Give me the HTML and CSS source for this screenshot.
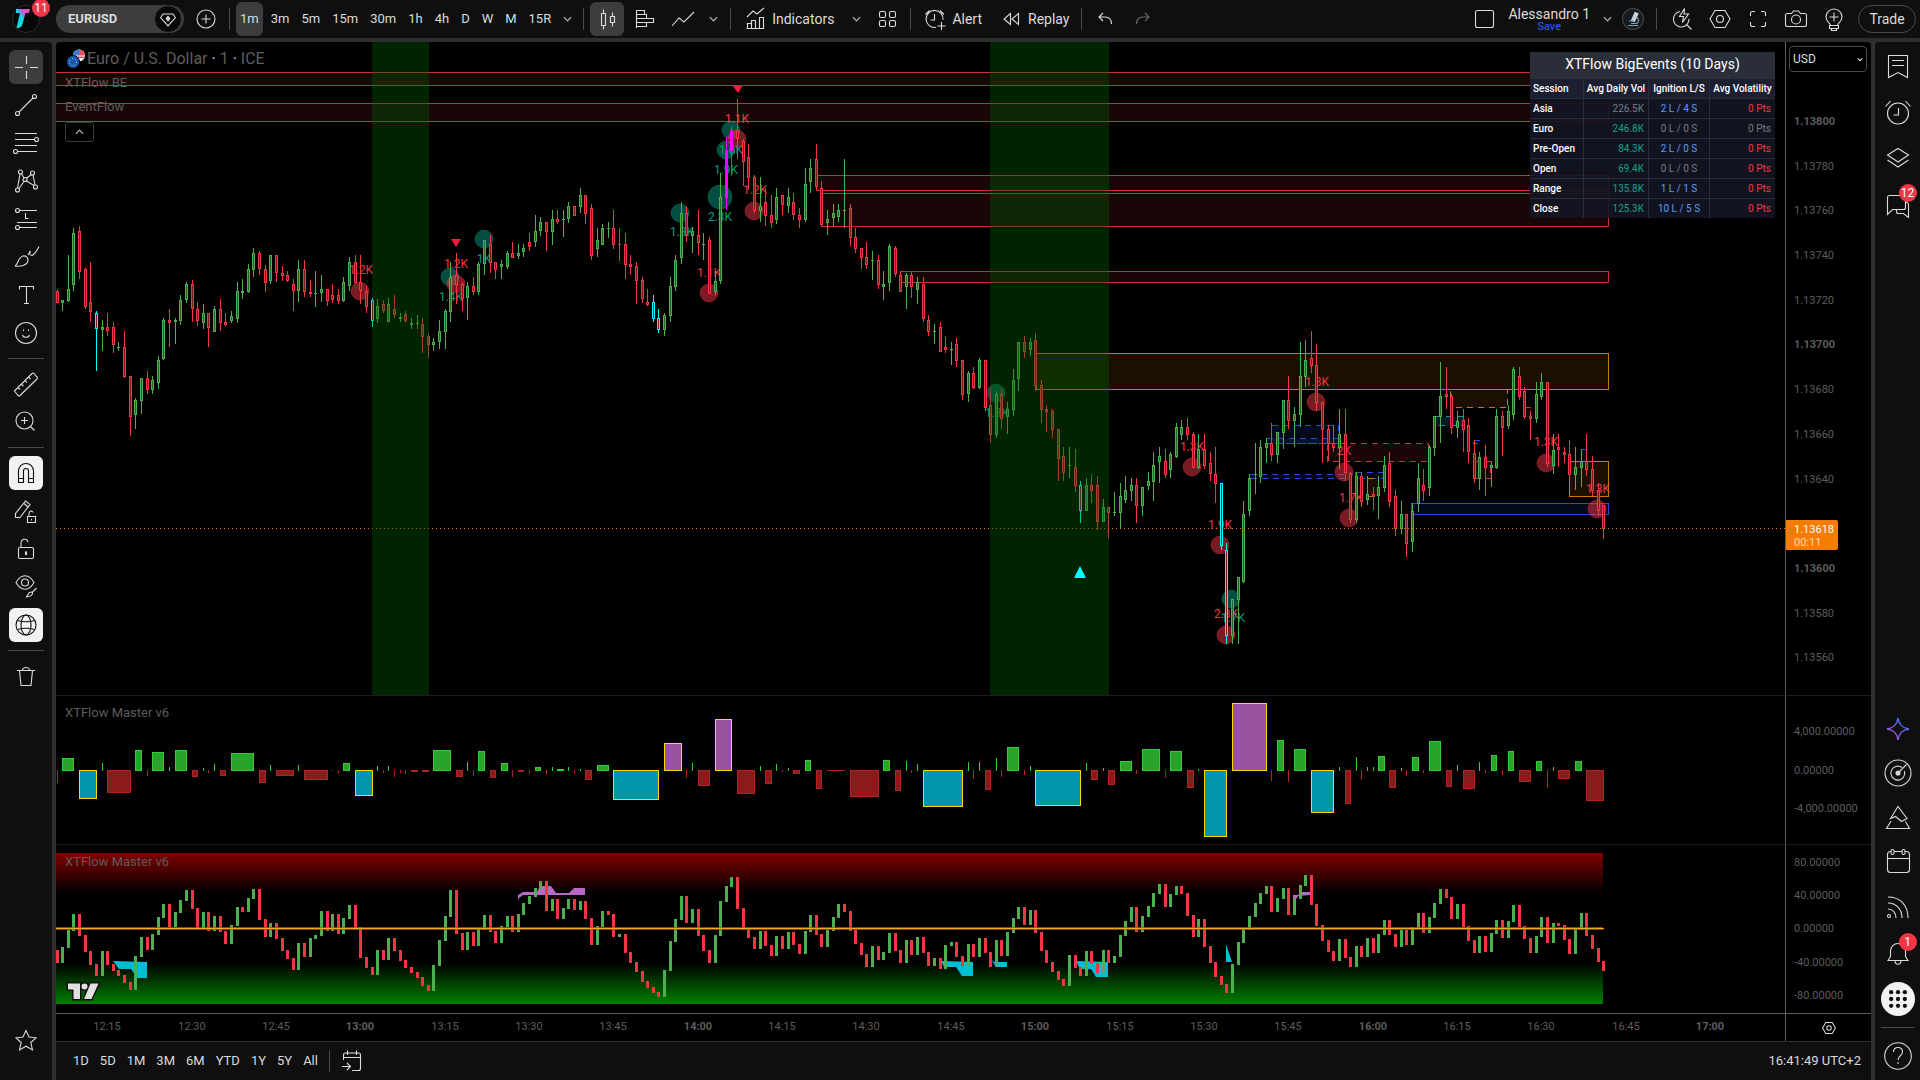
FILE: index.html
```html
<!DOCTYPE html>
<html lang="en">
<head>
<meta charset="utf-8">
<meta name="viewport" content="width=device-width, initial-scale=1">
<title>EURUSD 1.13618 Alessandro 1</title>
<link rel="stylesheet" href="styles.css">
</head>
<body>
<div class="app">
  <header class="topbar">
    <button class="logo" aria-label="Main menu">
      <svg width="30" height="30" viewBox="0 0 30 30"><defs><linearGradient id="lg" x1="1" y1="0" x2="0" y2="1"><stop offset="0" stop-color="#ff3fa4"/><stop offset=".35" stop-color="#c45be0"/><stop offset=".5" stop-color="#12d3ee"/><stop offset="1" stop-color="#10e0c8"/></linearGradient></defs><circle cx="15" cy="15" r="13.5" fill="#070707" stroke="#2b2b2b"/><path d="M5 5h14l-1 4h-3.500l-3 11c-1 3-2.500 4.500-6 4l3.500-15H5z" fill="url(#lg)"/></svg>
      <span class="badge">11</span>
    </button>
    <button class="symbol"><b>EURUSD</b><span class="gem"><svg class="icon" viewBox="0 0 28 28"><path d="M8.500 8.500h11l2.500 4-8 9-8-9z"/><path class="solid" d="M14 11l2 2.500-2 2.500-2-2.500z"/></svg></span></button>
    <button class="tool plus" aria-label="Compare"><svg class="icon" viewBox="0 0 28 28"><circle cx="14" cy="14" r="9"/><path d="M14 9.500v9M9.500 14h9"/></svg></button>
    <i class="sep"></i>
    <nav class="intervals">
      <button class="on">1m</button><button>3m</button><button>5m</button><button>15m</button><button>30m</button><button>1h</button><button>4h</button><button>D</button><button>W</button><button>M</button><button>15R</button>
      <button class="chev" aria-label="More intervals"><svg viewBox="0 0 10 6"><path d="M1 1l4 4 4-4"/></svg></button>
    </nav>
    <i class="sep"></i>
    <button class="tool wide on" aria-label="Candles"><svg class="icon" viewBox="0 0 28 28"><path d="M8.500 8.500h4v12h-4zM10.500 4.500v4M10.500 20.500v4M17.500 11.500h4v6h-4zM19.500 7.500v4M19.500 17.500v4"/></svg></button>
    <button class="tool wide" aria-label="Volume profile"><svg class="icon" viewBox="0 0 28 28"><path d="M5.500 5v18M5.500 5.500h8v4h-8M5.500 9.500h10v4h-10M5.500 13.500h17v4h-17M5.500 17.500h10v4h-10"/></svg></button>
    <button class="tool wide" aria-label="Line"><svg class="icon" viewBox="0 0 28 28"><path d="M3 21l7-8 5 4L25 7"/></svg></button>
    <button class="chev types" aria-label="Chart types"><svg viewBox="0 0 10 6"><path d="M1 1l4 4 4-4"/></svg></button>
    <i class="sep"></i>
    <button class="tool text"><svg class="icon" viewBox="0 0 28 28"><path d="M6 12l6-6 4 3 7-6M6.500 23.500v-5h4v5M10.500 23.500v-8h4v8M18.500 23.500v-11h4v11zM5.500 23.500h17"/></svg>Indicators</button>
    <button class="chev" aria-label="Favorite indicators"><svg viewBox="0 0 10 6"><path d="M1 1l4 4 4-4"/></svg></button>
    <button class="tool wide" aria-label="Templates"><svg class="icon" viewBox="0 0 28 28"><rect x="6.500" y="6.500" width="6" height="6" rx="1.500"/><rect x="16.500" y="6.500" width="6" height="6" rx="1.500"/><rect x="6.500" y="15.500" width="6" height="6" rx="1.500"/><rect x="16.500" y="15.500" width="6" height="6" rx="1.500"/></svg></button>
    <i class="sep"></i>
    <button class="tool text"><svg class="icon" viewBox="0 0 28 28"><path d="M15 22.300A8.500 8.500 0 1 1 22 15M13.500 9v6h-4M4.500 9.500l4-4M19 5.500l4 4M20.500 17v8M16.500 21h8"/></svg>Alert</button>
    <button class="tool text"><svg class="icon" viewBox="0 0 28 28"><path d="M13.500 8.500v11L7 14zM21.500 8.500v11L15 14z"/></svg>Replay</button>
    <i class="sep"></i>
    <button class="tool hist" aria-label="Undo"><svg class="icon" viewBox="0 0 28 28"><path d="M12 8l-4 4 4 4M8 12h6c4 0 6.500 2.500 6.500 7"/></svg></button>
    <button class="tool hist dim" aria-label="Redo"><svg class="icon" viewBox="0 0 28 28"><path d="M16 8l4 4-4 4M20 12h-6c-4 0-6.500 2.500-6.500 7"/></svg></button>
    <span class="grow"></span>
    <button class="tool wide setup" aria-label="Layout setup"><svg class="icon" viewBox="0 0 28 28"><rect x="4.500" y="5.500" width="18" height="17" rx="2"/></svg></button>
    <button class="layout">Alessandro 1<small>Save</small></button>
    <button class="chev" aria-label="Layouts"><svg viewBox="0 0 10 6"><path d="M1 1l4 4 4-4"/></svg></button>
    <button class="tool lab" aria-label="Lab"><svg class="icon" viewBox="0 0 28 28"><circle cx="14" cy="14" r="10.500" fill="#161b20" stroke="#444"/><path d="M16 7.500l3 1-3.500 8-3-1z" fill="#c6d2dc" stroke="#c6d2dc"/><path d="M9 20.500h10M12 18.500h6c2-2 2-4 0-6M10 16h5" stroke="#7fa0b8"/></svg></button>
    <i class="sep"></i>
    <button class="tool act" aria-label="Quick search"><svg class="icon" viewBox="0 0 28 28"><path d="M12 6.500a7.800 7.800 0 1 0 9 7.500M18.500 19.500l5 5M16.500 3.500l-5 8h4l-1 6 6-8.500h-4.500z"/></svg></button>
    <button class="tool act" aria-label="Settings"><svg class="icon" viewBox="0 0 28 28"><path d="M9 5.500h10l5 8.500-5 8.500H9L4 14z"/><circle cx="14" cy="14" r="3.500"/></svg></button>
    <button class="tool act" aria-label="Fullscreen"><svg class="icon" viewBox="0 0 28 28"><path d="M6.500 11V8.500a2 2 0 0 1 2-2H11M17 6.500h2.500a2 2 0 0 1 2 2V11M21.500 17v2.500a2 2 0 0 1-2 2H17M11 21.500H8.500a2 2 0 0 1-2-2V17"/></svg></button>
    <button class="tool act" aria-label="Snapshot"><svg class="icon" viewBox="0 0 28 28"><path d="M5.500 8.500h4l2-2.500h5l2 2.500h4a2 2 0 0 1 2 2v9a2 2 0 0 1-2 2h-17a2 2 0 0 1-2-2v-9a2 2 0 0 1 2-2z"/><circle cx="14" cy="14.500" r="4.500"/></svg></button>
    <button class="tool act" aria-label="Publish"><svg class="icon" viewBox="0 0 28 28"><path d="M10.500 20.500c0-2-4.500-4-4.500-8.500a8 8 0 0 1 16 0c0 4.500-4.500 6.500-4.500 8.500zM9.500 20.500h9v3h-9zM11.500 23.500v2h5v-2M14 7.500v9M9.500 12h9"/></svg></button>
    <button class="trade">Trade</button>
  </header>

  <div class="body">
    <aside class="left">
      <button class="dark" aria-label="Cross"><svg class="icon" viewBox="0 0 28 28"><path d="M14.500 3v8M14.500 18v8M3 14.500h8M18 14.500h8"/></svg></button>
      <button aria-label="Trend line"><svg class="icon" viewBox="0 0 28 28"><circle cx="5.500" cy="22.500" r="2"/><circle cx="22.500" cy="5.500" r="2"/><path d="M7 21L21 7"/></svg></button>
      <button aria-label="Fibonacci"><svg class="icon" viewBox="0 0 28 28"><path d="M3 4.500h22M3 10.500h20M3 16.500h22M5 22.500h20"/><circle cx="24.500" cy="10.500" r="2"/><circle cx="3.500" cy="22.500" r="2"/></svg></button>
      <button aria-label="Patterns"><svg class="icon" viewBox="0 0 28 28"><path d="M5.500 21.500L8 7M9.500 7l3 4.500M14.500 14l7.500 4.500M19.500 7.500L14 11.500M12 14.500L7 21.500M21 8l2 10"/><circle cx="8.500" cy="5" r="2"/><circle cx="20.500" cy="6" r="2"/><circle cx="5.500" cy="23" r="2"/><circle cx="23.500" cy="20" r="2"/><circle cx="13" cy="12.500" r="2"/></svg></button>
      <button aria-label="Forecasting"><svg class="icon" viewBox="0 0 28 28"><path d="M7 5.500h18M5 17.500h20M7 22.500h18M13.500 8v5.500h3"/><circle cx="5.500" cy="5.500" r="2"/><circle cx="5.500" cy="22.500" r="2"/></svg></button>
      <button aria-label="Brush"><svg class="icon" viewBox="0 0 28 28"><path d="M3 23c3-1 3-9 8-10 3-.5 5 1.500 5 4 0 5-7 7-13 6zM16 12l2.500-4M20 12.500c3-1.500 5-5 7-9"/><path d="M18 8c-1 3 0 4.500 2 4.500"/></svg></button>
      <button aria-label="Text"><svg class="icon" viewBox="0 0 28 28"><path d="M7.500 8.500v-3h14v3M14.500 5.500v17M12 22.500h5"/></svg></button>
      <button aria-label="Icons"><svg class="icon" viewBox="0 0 28 28"><circle cx="14" cy="14" r="10.500"/><path d="M10.500 16c1 3 6 3 7 0M11.500 10.500v1.500M16.500 10.500v1.500"/></svg></button>
      <i></i>
      <button aria-label="Measure"><svg class="icon" viewBox="0 0 28 28"><path d="M2.500 21L20 3.500a1.400 1.400 0 0 1 2 0L25 7a1.400 1.400 0 0 1 0 2L8 25.500a1.400 1.400 0 0 1-2 0zM6 17.500l2 2M9.500 14l2 2M13 10.500l2 2M16.500 7l2 2"/></svg></button>
      <button aria-label="Zoom in"><svg class="icon" viewBox="0 0 28 28"><circle cx="12.500" cy="12.500" r="8.500"/><path d="M12.500 9v7M9 12.500h7M18.500 18.500l4 4"/></svg></button>
      <i></i>
      <button class="light" aria-label="Magnet"><svg class="icon" viewBox="0 0 28 28"><path d="M6.500 23.500V12a7.500 7.500 0 0 1 15 0v11.500h-5V12a2.500 2.500 0 0 0-5 0v11.500zM6.500 19.500h5M16.500 19.500h5"/></svg></button>
      <button aria-label="Stay in drawing mode"><svg class="icon" viewBox="0 0 28 28"><path d="M3.500 20.500v-4L13.500 4l4.500 3.500-10 13zM12 6.500l4 3.500M15.500 19.500h8v6h-8zM17 19.500v-3c0-3 4-3 4-1M19.500 22v1.500"/></svg></button>
      <button aria-label="Lock all"><svg class="icon" viewBox="0 0 28 28"><rect x="6.500" y="12.500" width="15" height="11" rx="1.500"/><path d="M9 12.500V9c0-6 6-6 7-2"/><path class="solid" d="M13.500 17h1v2.500h-1z"/></svg></button>
      <button aria-label="Hide drawings"><svg class="icon" viewBox="0 0 28 28"><path d="M4 9.500c5-9 13-9 18 0-5 9-13 9-18 0z"/><circle cx="13" cy="9.500" r="3.500"/><path d="M14 24c2-.5 1.500-5 5-5 3 0 2 4.500-5 5zM20.500 19l4-4"/></svg></button>
      <button class="light" aria-label="Sync drawings"><svg class="icon" viewBox="0 0 28 28"><circle cx="14" cy="14" r="10"/><ellipse cx="14" cy="14" rx="5" ry="10"/><path d="M5.500 9.500c5 1.500 12 1.500 17 0M5.500 18.500c5-1.500 12-1.500 17 0"/></svg></button>
      <i></i>
      <button aria-label="Remove"><svg class="icon" viewBox="0 0 28 28"><path d="M5 8.500h18M7.500 8.500l1.500 15h10l1.500-15M10.500 8.500c0-4 7-4 7 0"/></svg></button>
      <span class="grow"></span>
      <button aria-label="Favorites"><svg class="icon" viewBox="0 0 28 28"><path d="M14 4.500l3 6.500 7 .8-5.200 4.700 1.700 7.500-6.500-3.800L7.500 24l1.700-7.500L4 11.800l7-.8z"/></svg></button>
    </aside>

    <main class="chart">
      <section class="pane">
        <svg class="plot" id="price"></svg>
        <div class="legend">
          <h1><svg width="22" height="22" viewBox="0 0 22 22"><circle cx="14" cy="7.500" r="6" fill="#f2f2f2"/><path d="M14 1.500a6 6 0 0 1 6 6h-6zM8.500 10h11v-1.500h-11z" fill="#e8505b"/><path d="M14 1.500a6 6 0 0 0-6 6h6z" fill="#3a7bd5"/><circle cx="8" cy="14" r="6.500" fill="#1659b7" stroke="#000"/><circle cx="8" cy="14" r="3.500" fill="none" stroke="#ffd54a" stroke-dasharray="1 2"/></svg>Euro / U.S. Dollar <em>·</em> 1 <em>·</em> ICE</h1>
          <p>XTFlow BE</p>
          <p>EventFlow</p>
          <button aria-label="Hide indicators legend"><svg viewBox="0 0 10 6"><path d="M1 5l4-4 4 4"/></svg></button>
        </div>
        <table class="events">
          <caption>XTFlow BigEvents (10 Days)</caption>
          <thead><tr><th>Session</th><th>Avg Daily Vol</th><th>Ignition L/S</th><th>Avg Volatility</th></tr></thead>
          <tbody>
            <tr><th>Asia</th><td>226.5K</td><td class="b">2 L / 4 S</td><td class="r">0 Pts</td></tr>
            <tr><th>Euro</th><td class="g">246.8K</td><td>0 L / 0 S</td><td>0 Pts</td></tr>
            <tr><th>Pre-Open</th><td class="g">84.3K</td><td class="b">2 L / 0 S</td><td class="r">0 Pts</td></tr>
            <tr><th>Open</th><td class="g">69.4K</td><td>0 L / 0 S</td><td class="r">0 Pts</td></tr>
            <tr><th>Range</th><td class="g">135.8K</td><td class="b">1 L / 1 S</td><td class="r">0 Pts</td></tr>
            <tr><th>Close</th><td class="g">125.3K</td><td class="b">10 L / 5 S</td><td class="r">0 Pts</td></tr>
          </tbody>
        </table>
      </section>
      <section class="scale">
        <svg class="plot" id="scale1"></svg>
        <label class="currency"><select aria-label="Currency"><option>USD</option></select><svg viewBox="0 0 10 6"><path d="M1 1l4 4 4-4"/></svg></label>
        <div class="last">1.13618<span>00:11</span></div>
      </section>
      <section class="pane"><svg class="plot" id="delta"></svg><div class="legend"><p>XTFlow Master v6</p></div></section>
      <section class="scale"><svg class="plot" id="scale2"></svg></section>
      <section class="pane last-pane"><svg class="plot" id="osc"></svg><div class="legend"><p>XTFlow Master v6</p></div>
        <svg class="brand" width="34" height="20" viewBox="0 0 34 20"><path d="M2 2.500h12V18H7.500V8.500H2zM15.500 5.500a3 3 0 1 0 6 0 3 3 0 0 0-6 0zM24.500 2.500h8L25.500 18h-7.500z" fill="#e0e0e0" stroke="#111" stroke-width="3" paint-order="stroke"/></svg></section>
      <section class="scale last-pane"><svg class="plot" id="scale3"></svg></section>
      <section class="times"><svg class="plot" id="times"></svg></section>
      <section class="corner"><button aria-label="Axis settings"><svg class="icon" width="20" height="20" viewBox="0 0 28 28"><path d="M9 5.500h10l5 8.500-5 8.500H9L4 14z"/><circle cx="14" cy="14" r="3.500"/></svg></button></section>
      <footer class="ranges">
        <button>1D</button><button>5D</button><button>1M</button><button>3M</button><button>6M</button><button>YTD</button><button>1Y</button><button>5Y</button><button>All</button>
        <i class="sep"></i>
        <button class="goto" aria-label="Go to date"><svg class="icon" viewBox="0 0 28 28"><path d="M5.500 13V8a2 2 0 0 1 2-2h13a2 2 0 0 1 2 2v13.500a2 2 0 0 1-2 2H14M5.500 10.500h17M9.500 3.500V8M18.500 3.500V8M4 19.500h8M9 16l3.500 3.500L9 23"/></svg></button>
        <span class="grow"></span>
        <button class="clock">16:41:49 UTC+2</button>
      </footer>
    </main>

    <aside class="right">
      <div class="grp">
        <button aria-label="Watchlist"><svg class="icon" viewBox="0 0 28 28"><path d="M4.500 3.500h19v22L14 20.500l-9.500 5zM8 8.500h12M8 13.500h12"/></svg></button>
        <button aria-label="Alerts"><svg class="icon" viewBox="0 0 28 28"><circle cx="14" cy="15.500" r="10.500"/><path d="M14.500 10v7h-5M1.500 8.500l5-5.500M26.500 8.500l-5-5.500"/></svg></button>
        <button aria-label="Object tree"><svg class="icon" viewBox="0 0 28 28"><path d="M14 4.500l10.500 6.500L14 18 3.500 11zM3.500 16L14 23l10.500-7"/></svg></button>
        <button aria-label="Chats"><svg class="icon" viewBox="0 0 28 28"><path d="M3.500 24.500v-17a2 2 0 0 1 2-2h14a2 2 0 0 1 2 2v10a2 2 0 0 1-2 2h-11zM21.500 12.500h1a2 2 0 0 1 2 2v13l-5-4h-5a2 2 0 0 1-2-2v-2"/></svg><span class="badge">12</span></button>
      </div>
      <span class="grow"></span>
      <div class="grp mid">
        <button aria-label="AI"><svg class="icon" viewBox="0 0 28 28"><defs><linearGradient id="ai" x1="1" y1="0" x2="0" y2="1"><stop offset="0" stop-color="#2b7bff"/><stop offset="1" stop-color="#c14be0"/></linearGradient></defs><path stroke="url(#ai)" stroke-width="1.500" d="M14 3c1 7 4 10 11 11-7 1-10 4-11 11-1-7-4-10-11-11 7-1 10-4 11-11z"/></svg></button>
        <button aria-label="Screeners"><svg class="icon" viewBox="0 0 28 28"><circle cx="14" cy="14" r="13"/><path d="M18 8.500A7 7 0 1 0 20.500 12M14 14l8.500-8.500"/><circle class="solid" cx="14" cy="14" r="2"/></svg></button>
        <button aria-label="Pine"><svg class="icon" viewBox="0 0 28 28"><path d="M14 3.500L6.500 15.500l5-2 6 5 5.500-3zM7 18L2.500 25.500h23L21.500 18.500"/></svg></button>
        <button aria-label="Calendar"><svg class="icon" viewBox="0 0 28 28"><rect x="3.500" y="4.500" width="22" height="21" rx="3"/><path d="M3.500 11.500h22"/><rect x="7" y="2.500" width="3" height="5" rx="1.500" fill="#0f0f0f"/><rect x="18" y="2.500" width="3" height="5" rx="1.500" fill="#0f0f0f"/></svg></button>
      </div>
      <div class="grp">
        <button aria-label="News"><svg class="icon" viewBox="0 0 28 28"><path d="M4 4c12 0 20 8 20 21M4 10c8 0 14 6 14 15M4 16c5 0 8 4 8 9"/><circle cx="5" cy="23" r="1.500"/></svg></button>
        <button aria-label="Notifications"><svg class="icon" viewBox="0 0 28 28"><path d="M4 21.500l2.500-4V12a7.500 7.500 0 0 1 15 0v5.500l2.500 4zM11 21.500c0 5 6 5 6 0"/></svg><span class="badge">1</span></button>
        <button aria-label="Apps"><span class="apps"><svg viewBox="0 0 28 28"><g fill="#0f0f0f"><circle cx="6" cy="6" r="2.500"/><circle cx="14" cy="6" r="2.500"/><circle cx="22" cy="6" r="2.500"/><circle cx="6" cy="14" r="2.500"/><circle cx="14" cy="14" r="2.500"/><circle cx="22" cy="14" r="2.500"/><circle cx="6" cy="22" r="2.500"/><circle cx="14" cy="22" r="2.500"/><circle cx="22" cy="22" r="2.500"/></g></svg></span></button>
      </div>
      <i></i>
      <button aria-label="Help"><svg class="icon" viewBox="0 0 28 28"><circle cx="14" cy="14" r="13.300"/><path d="M9.500 10c0-6 9-6 9 0 0 4-4.500 3.500-4.500 8M14 20v2"/></svg></button>
    </aside>
  </div>
</div>
<script src="chart.js"></script>
</body>
</html>
```
FILE: styles.css
```css
* { box-sizing: border-box; }
html, body { height: 100%; margin: 0; }
body { background: #2e2e2e; color: #dbdbdb; font: 14px/18px Roboto, "Liberation Sans", sans-serif; overflow: hidden; }
button { background: none; border: 0; margin: 0; padding: 0; color: inherit; font: inherit; cursor: pointer; }
.grow { flex: 1; }
.app { display: flex; flex-direction: column; gap: 4px; height: 100vh; min-height: 800px; }
.icon { width: 28px; height: 28px; fill: none; stroke: currentColor; stroke-width: 1.1; flex: none; }
.icon .solid { fill: currentColor; }
.badge { position: absolute; min-width: 18px; height: 18px; border-radius: 9px; background: #f23645; color: #fff; font-size: 12px; line-height: 18px; text-align: center; }

/* top toolbar */
.topbar { height: 38px; flex: none; display: flex; align-items: center; background: #0f0f0f; padding: 0 4px 0 11px; }
.logo { position: relative; width: 30px; height: 30px; }
.logo .badge { left: 21px; top: -5px; }
.symbol { display: flex; align-items: center; justify-content: space-between; width: 128px; height: 28px; margin-left: 15px; padding-left: 12px; border-radius: 14px; background: #3d3d3d; }
.symbol b { font-weight: 700; font-size: 13px; }
.gem { display: flex; width: 28px; height: 28px; margin-right: 2px; border-radius: 14px; background: #0a0a0a; border: 1px solid #3d3d3d; justify-content: center; align-items: center; }
.gem .icon { width: 26px; height: 26px; }
.sep { width: 1px; height: 22px; background: #4a4a4a; margin: 0 6px; flex: none; }
.tool { height: 34px; display: flex; align-items: center; justify-content: center; border-radius: 6px; }
.plus { width: 34px; margin-left: 5px; }
.wide, .hist { width: 34px; margin-right: 4px; }
.wide:has(+ .sep) { margin-right: 0; }
.on { background: #3d3d3d; }
.dim { color: #6a6a6a; }
.intervals { display: flex; align-items: center; height: 34px; font-size: 13px; }
.intervals button { height: 34px; padding: 0 6px; border-radius: 6px; }
.intervals .on { padding: 0 4px; margin-right: 2px; }
.chev { width: 22px; height: 34px; display: flex; align-items: center; justify-content: center; }
.chev svg, .legend button svg { width: 9px; height: 6px; fill: none; stroke: #b8b8b8; stroke-width: 1.3; }
.intervals .chev { padding: 0; width: 20px; }
.types { margin-left: -2px; }
.text { padding: 0 6px 0 4px; gap: 3px; }
.text + .text { margin-left: 5px; }
.text + .chev { margin: 0 3px 0 5px; }
.setup { margin-right: 0; }
.layout { height: 34px; line-height: 16px; text-align: center; margin: 0 6px; }
.layout small { display: block; font-size: 11px; line-height: 10px; color: #2962ff; }
.lab { width: 30px; margin-right: 2px; }
.act { width: 38px; }
.trade { width: 58px; height: 28px; border: 1px solid #4a4a4a; border-radius: 14px; margin-left: 5px; }

/* side toolbars */
.body { flex: 1; min-height: 0; display: flex; gap: 4px; }
.left { width: 52px; display: flex; flex-direction: column; align-items: center; gap: 4px; padding: 8px 0 23px; background: #0f0f0f; border-radius: 0 4px 0 0; }
.left button { width: 34px; height: 34px; flex: none; display: flex; align-items: center; justify-content: center; border-radius: 6px; }
.left .dark { background: #3d3d3d; }
.left .light { background: #f2f2f2; color: #0f0f0f; }
.left i { width: 36px; height: 1px; margin: 4px 0; background: #4a4a4a; flex: none; }
.right { width: 45px; display: flex; flex-direction: column; align-items: center; padding: 3px 0; background: #0f0f0f; border-radius: 4px 0 0 0; }
.right button { position: relative; width: 44px; height: 42px; display: flex; align-items: center; justify-content: center; }
.grp { display: flex; flex-direction: column; gap: 4px; }
.mid { margin-bottom: 5px; }
.mid button { height: 40px; }
.right .badge { right: 3px; top: 1px; }
.right > i { width: 33px; height: 1px; margin: 7px 0; background: #4a4a4a; }
.apps { width: 34px; height: 34px; border-radius: 17px; background: #f2f2f2; display: flex; align-items: center; justify-content: center; }
.apps svg { width: 24px; height: 24px; }

/* chart area */
.chart { flex: 1; min-width: 0; display: grid; grid-template-columns: minmax(0, 1fr) 86px; grid-template-rows: minmax(0, 1fr) 149px 168px 28px 39px; background: #000; border-radius: 4px 4px 0 0; overflow: hidden; }
.pane, .scale { position: relative; border-bottom: 1px solid #1c1c1c; overflow: hidden; }
.scale, .corner { border-left: 1px solid #5c5c5c; }
.last-pane { border-bottom: 0; }
.plot { position: absolute; inset: 0; width: 100%; height: 100%; font-size: 11px; fill: #5d5d5d; }
.plot .tag { font-size: 12px; text-anchor: middle; }
.plot .major { font-weight: 700; }
.legend { position: relative; padding: 8px 0 0 9px; color: #5d5d5d; font-size: 13px; }
.legend h1 { display: flex; align-items: center; margin: 0 0 6px; height: 18px; font-size: 16px; font-weight: 400; white-space: pre; }
.legend em { font-style: normal; color: #dbdbdb; }
.legend p { margin: 0 0 6px; line-height: 18px; }
.legend button { width: 29px; height: 20px; border: 1px solid #3d3d3d; border-radius: 3px; display: flex; align-items: center; justify-content: center; }
.brand { position: absolute; left: 10px; bottom: 12px; }

.events { position: absolute; top: 10px; right: 10px; width: 245px; border-collapse: separate; border-spacing: 0; table-layout: fixed; background: rgba(19, 22, 34, .9); font-size: 10px; line-height: 12px; }
.events caption { height: 27px; line-height: 25px; background: #2a2e39; color: #fff; font-size: 14px; }
.events th, .events td { height: 20px; padding: 0 3px; border-left: 1px solid #2a2e39; border-top: 1px solid #2a2e39; font-weight: 500; }
.events th:first-child { width: 53px; text-align: left; color: #fff; border-left: 0; }
.events thead th { height: 19px; background: #1c1f30; color: #fff; padding: 0; text-align: center; border-top: 0; }
.events thead th:first-child { padding: 0 3px; }
.events thead th:nth-child(2) { width: 65px; }
.events thead th:nth-child(3) { width: 61px; }
.events td { color: #787b86; font-weight: 400; text-align: right; padding-right: 4px; }
.events td:nth-child(3) { text-align: center; padding: 0; }
.events .g { color: #14a085; }
.events .b { color: #5b9cf6; }
.events .r { color: #f23645; }

.currency { position: absolute; left: 3px; right: 4px; top: 4px; display: block; }
.currency select { appearance: none; width: 100%; height: 26px; padding: 0 3px; border: 1px solid #4a4a4a; border-radius: 4px; background: #000; color: #dbdbdb; font: 12px/18px Roboto, sans-serif; }
.currency svg { position: absolute; right: 4px; top: 11px; width: 6px; height: 5px; fill: none; stroke: #dbdbdb; stroke-width: 1.8; }
.last { position: absolute; left: 0; top: 478px; width: 52px; height: 30px; padding: 3px 0 0 8px; border-radius: 0 2px 2px 0; background: #f57c00; color: #fff; font-size: 11px; line-height: 13px; }
.last span { display: block; color: #fbd9b5; }
.times { position: relative; border-top: 1px solid #5c5c5c; }
.corner { border-top: 1px solid #5c5c5c; display: flex; align-items: center; justify-content: center; }
.corner button { display: flex; }
.corner .icon { width: 18px; height: 18px; stroke-width: 1.6; }

/* date ranges */
.ranges { grid-column: 1 / -1; display: flex; align-items: center; padding: 0 5px 0 11px; background: #0f0f0f; border-top: 1px solid #2e2e2e; font-size: 13px; }
.ranges button { height: 30px; padding: 0 5px 0 6px; }
.ranges .goto { padding: 0 2px; display: flex; align-items: center; }
```
FILE: chart.js
```js
const NS = 'http://www.w3.org/2000/svg';
const GREEN = '#4caf50', RED = '#f23645', TEAL = '#089981';
const FIRST = -54;                       // first visible bar, counted from 13:00
const col = k => Math.round(304.3 + 5.624 * k);

function draw(root, tag, attrs, text) {
  const el = document.createElementNS(NS, tag);
  for (const name in attrs) el.setAttribute(name, attrs[name]);
  if (text !== undefined) el.textContent = text;
  root.appendChild(el);
  return el;
}
function rect(root, x, y, w, h, fill, more) {
  return draw(root, 'rect', Object.assign({ x, y, width: w, height: h, fill, 'shape-rendering': 'crispEdges' }, more));
}
const get = id => document.getElementById(id);

/* ---- price pane: colour, high, body top, body bottom, low (three units to a pixel) ---- */
const CANDLES = `r 868 873 908 910,g 900 900 908 932,g 765 868 902 905,g 684 699 854 872,r 678 693 815 838,r 805 808 920 926,r 786 905 935 965,c 933 938 988 1112,g 960 982 990 1052,r 938 982 994 1007,r 966 981 1035 1058,g 1025 1040 1043 1052,r 992 1042 1130 1133,r 1128 1129 1250 1308,g 1195 1201 1244 1287,g 1134 1135 1202 1242,r 1113 1135 1170 1182,g 1128 1141 1170 1182,g 1068 1080 1148 1167,g 955 960 1077 1080,r 926 960 968 1040,g 955 961 967 1032,g 884 899 962 975,g 846 853 900 908,r 840 853 928 965,r 905 928 964 977,g 911 940 968 987,r 938 940 983 1040,g 918 927 995 997,r 898 927 968 992,r 938 966 974 978,g 933 947 962 970,g 846 873 957 970,g 838 873 880 897,g 792 808 877 880,g 744 759 810 830,r 753 759 808 825,r 795 808 849 875,g 765 766 842 851,r 765 766 820 846,r 797 820 827 842,r 813 826 844 846,r 838 852 874 932,g 780 807 874 905,r 780 807 876 890,r 840 876 881 890,g 813 878 880 920,g 825 867 880 905,r 867 867 903 917,r 853 885 900 910,r 867 886 902 911,g 832 846 902 905,g 770 786 858 872,r 765 786 848 853,
r 766 846 873 911,r 858 873 920 938,c 894 900 962 980,g 898 918 957 970,r 900 912 934 938,g 894 912 965 966,r 885 927 946 954,g 940 950 958 966,r 933 942 962 970,g 954 968 974 986,g 946 970 973 986,r 955 972 1011 1059,r 1000 1008 1035 1074,g 1014 1027 1034 1052,g 960 993 1027 1046,g 928 934 996 1046,g 786 830 935 966,r 759 826 854 911,r 846 852 898 932,g 846 858 895 960,r 830 858 876 886,g 787 793 875 884,g 720 720 793 824,r 705 732 788 818,r 786 787 810 838,g 780 793 800 838,g 753 760 800 806,r 726 760 773 775,g 733 759 767 778,g 733 744 756 770,r 700 726 741 753,g 645 693 726 741,g 651 666 694 708,r 666 667 695 753,g 630 658 695 735,r 630 657 667 672,g 630 657 659 711,g 606 619 658 669,r 618 619 647 648,g 564 586 620 639,r 585 586 642 672,r 612 625 767 780,g 684 720 747 770,g 672 684 734 735,g 666 683 686 713,r 630 685 734 747,r 684 732 735 783,r 699 733 794 838,r 765 793 800 825,r 787 799 842 912,
r 831 840 897 910,r 866 906 914 917,c 885 906 957 966,c 927 954 990 998,g 939 946 990 1007,g 831 858 947 966,g 765 780 860 872,g 606 640 773 792,r 618 640 707 726,g 680 693 707 759,r 630 706 728 766,g 699 732 734 780,r 712 720 881 882,g 813 842 876 884,g 519 592 842 851,m 412 451 594 630,m 378 391 452 525,r 297 391 418 477,r 417 424 486 558,r 432 472 533 570,r 525 531 633 638,g 531 618 633 666,r 563 606 647 678,r 586 646 668 684,g 564 592 660 671,r 585 586 614 645,g 564 592 619 639,r 579 606 646 660,r 624 646 659 684,g 504 553 660 666,g 477 505 545 579,r 432 478 562 570,r 543 564 675 680,g 630 658 668 705,g 612 640 654 678,g 612 630 652 666,g 477 630 632 684,r 612 625 713 738,r 684 712 746 759,r 744 745 773 807,r 726 771 794 807,g 753 780 782 840,r 765 780 854 867,g 813 853 860 900,g 732 738 848 872,r 738 745 821 831,r 813 826 875 877,g 819 825 860 927,r 813 825 860 894,g 831 846 870 912,
r 831 852 957 966,r 945 961 995 1007,g 972 993 996 1032,r 966 981 1055 1056,r 1007 1041 1049 1059,g 1025 1047 1049 1094,r 1014 1032 1082 1101,r 1080 1080 1184 1200,g 1113 1120 1183 1206,r 1101 1119 1163 1166,g 1074 1080 1163 1166,r 1080 1081 1223 1232,r 1167 1215 1304 1328,g 1173 1182 1304 1314,r 1166 1182 1256 1287,g 1206 1227 1250 1302,g 1107 1141 1230 1248,g 1025 1027 1136 1173,r 1007 1026 1055 1074,g 1014 1026 1049 1068,r 999 1020 1157 1173,r 1140 1155 1229 1268,r 1215 1227 1235 1296,r 1227 1233 1289 1314,r 1287 1288 1376 1443,r 1341 1369 1418 1443,g 1341 1395 1397 1434,r 1347 1401 1457 1475,c 1443 1456 1532 1569,g 1434 1456 1532 1533,r 1422 1456 1472 1509,r 1428 1456 1565 1590,g 1497 1522 1565 1566,r 1521 1522 1538 1617,g 1476 1536 1538 1548,g 1449 1488 1538 1584,g 1428 1470 1499 1509,g 1434 1456 1472 1503,r 1434 1456 1517 1569,g 1461 1462 1517 1548,g 1416 1444 1457 1470,g 1356 1395 1445 1503,g 1341 1369 1385 1449,r 1347 1384 1425 1434,g 1356 1363 1409 1434,g 1269 1282 1370 1374,g 1260 1282 1304 1320,r 1254 1282 1304 1320,r 1296 1303 1403 1404,g 1302 1347 1404 1406,
r 1302 1347 1398 1407,r 1356 1390 1423 1443,r 1341 1423 1451 1509,c 1449 1450 1637 1650,c 1629 1651 1907 1932,g 1797 1798 1907 1932,g 1731 1732 1799 1932,g 1503 1542 1745 1749,g 1422 1435 1532 1548,g 1329 1423 1425 1482,g 1320 1341 1430 1449,g 1314 1329 1343 1389,r 1269 1329 1364 1383,g 1296 1297 1364 1388,g 1200 1201 1298 1347,r 1128 1201 1262 1287,g 1221 1243 1262 1341,g 1025 1129 1244 1281,g 1020 1080 1130 1161,r 992 1075 1097 1119,r 1032 1096 1208 1234,r 1206 1207 1289 1389,r 1275 1288 1331 1383,r 1275 1330 1343 1356,g 1227 1303 1343 1407,r 1227 1303 1418 1443,r 1416 1418 1559 1569,g 1416 1429 1559 1569,r 1416 1429 1506 1521,g 1428 1482 1500 1515,r 1461 1483 1490 1530,g 1428 1462 1489 1557,g 1368 1396 1463 1476,r 1356 1390 1505 1521,r 1470 1488 1586 1608,g 1503 1543 1586 1602,r 1542 1543 1631 1671,g 1509 1532 1625 1656,g 1389 1435 1511 1536,r 1407 1456 1472 1503,g 1335 1342 1463 1488,g 1248 1249 1344 1368,g 1086 1189 1250 1329,r 1101 1182 1191 1227,r 1182 1188 1283 1302,g 1233 1262 1283 1314,r 1227 1261 1290 1356,r 1254 1276 1357 1388,r 1320 1358 1436 1449,g 1356 1370 1436 1470,
r 1335 1370 1403 1488,g 1383 1396 1403 1461,g 1227 1249 1403 1407,r 1233 1249 1283 1368,g 1215 1233 1277 1287,g 1101 1108 1244 1260,r 1101 1129 1190 1200,r 1161 1174 1250 1257,r 1233 1249 1257 1320,g 1146 1182 1256 1269,g 1119 1147 1190 1200,r 1146 1147 1391 1401,g 1302 1349 1397 1422,r 1302 1342 1349 1401,r 1341 1357 1364 1388,r 1320 1363 1424 1434,g 1341 1402 1424 1470,g 1347 1383 1403 1461,r 1302 1384 1409 1428,r 1368 1408 1472 1488,r 1450 1471 1532 1548,r 1515 1516 1586 1617`;

const price = get('price');

// zones: kind, left, right, top, bottom, dashed
const STROKE = { r: '#cc2f3b', o: '#c97800', b: '#2050d0', t: '#0097a7' };
const FILL = { r: 'rgba(242,54,69,.1)', o: 'rgba(255,152,0,.1)', b: 'rgba(41,98,255,.1)', t: 'rgba(0,188,212,.15)' };
[['r', -4, 1552, 30, 43], ['r', -4, 1552, 61, 79], ['r', 760, 1552, 133, 148], ['r', 765, 1552, 151, 184], ['r', 844, 1552, 229, 240],
 ['o', 980, 1552, 311, 347], ['o', 1513, 1552, 419, 454], ['b', 1355, 1552, 461, 472],
 ['b', 1215, 1282, 383, 401, 1], ['b', 1210, 1282, 396, 401, 1], ['b', 1193, 1288, 432, 436, 1], ['b', 1299, 1328, 430, 436, 1],
 ['r', 1271, 1372, 401, 419, 1], ['o', 1394, 1451, 347, 365, 1], ['t', 1378, 1406, 374, 383, 1], ['o', 1311, 1322, 436, 454, 1],
 ['b', 1417, 1423, 398, 401, 1], ['r', 1417, 1434, 419, 436, 1], ['b', 1525, 1530, 407, 419, 1], ['r', 1468, 1474, 365, 374, 1]
].forEach(([c, l, r, t, b, dash]) => rect(price, l + .5, t + .5, r - l, b - t, FILL[c],
  dash ? { stroke: STROKE[c], 'stroke-dasharray': '6 5' } : { stroke: STROKE[c] }));

// volume bubbles
[['r', 304, 249], ['g', 428, 197], ['g', 394, 235], ['r', 400, 242], ['g', 624, 171], ['r', 653, 251], ['g', 664, 155, 12], ['g', 670, 108],
 ['g', 675, 88], ['r', 681, 97], ['r', 698, 169], ['g', 940, 351], ['r', 1136, 425], ['r', 1164, 503], ['g', 1175, 557], ['r', 1170, 593],
 ['r', 1260, 360], ['r', 1288, 430], ['r', 1293, 476], ['r', 1490, 421], ['r', 1541, 467]
].forEach(([c, cx, cy, r]) => {
  const ink = c === 'r' ? RED : TEAL;
  draw(price, 'circle', { cx, cy, r: r || 9, fill: ink, 'fill-opacity': .5, stroke: ink, 'stroke-opacity': .35 });
});

// bubble captions
[['r', 305, 227, '1.2K'], ['r', 400, 221, '1.2K'], ['g', 395, 254, '1.4K'], ['g', 428, 216, '1K'], ['r', 681, 76, '1.1K'], ['g', 675, 107, '1.6K'],
 ['g', 670, 127, '1.9K'], ['r', 699, 147, '1.2K'], ['g', 664, 174, '2.3K'], ['g', 626, 189, '1.3K'], ['r', 653, 230, '1.1K'], ['g', 941, 370, '1.3K'],
 ['r', 1136, 404, '1.3K'], ['r', 1164, 482, '1.9K'], ['r', 1170, 571, '2.8K'], ['g', 1177, 575, '1.7K'], ['r', 1261, 339, '1.3K'], ['r', 1288, 408, '2K'],
 ['r', 1295, 455, '1.7K'], ['r', 1490, 399, '1.3K'], ['r', 1542, 446, '1.3K']
].forEach(([c, x, y, s]) => draw(price, 'text', { x, y: y + 5, class: 'tag', fill: c === 'r' ? RED : TEAL }, s));

const INK = { r: RED, g: GREEN, c: '#00ffff', m: '#ff00ff' };
const CORE = { r: '#8a1522', g: '#25662a', c: '#7d1a24', m: '#ff00ff' };
CANDLES.split(',').forEach((row, i) => {
  const [c, ...v] = row.trim().split(' ');
  const [hi, top, bot, lo] = v.map(n => Math.round(n / 3) - 42);
  const x = col(FIRST + i);
  rect(price, x, hi, 1, Math.max(1, lo - hi), INK[c]);
  const h = Math.max(1, bot - top);
  rect(price, x - 1, top, 3, h, INK[c]);
  if (h > 2) rect(price, x, top + 1, 1, h - 2, CORE[c]);
});

draw(price, 'path', { d: 'M0 486.500H4000', stroke: '#f57c00', 'stroke-dasharray': '1 3', 'shape-rendering': 'crispEdges' });
rect(price, 316, 0, 57, '100%', 'rgba(0,97,0,.37)');
rect(price, 934, 0, 119, '100%', 'rgba(0,97,0,.37)');
draw(price, 'path', { d: 'M395 197h10l-5 8zM676 43h11l-5 8z', fill: '#ff1744' });
draw(price, 'path', { d: 'M1018 536l6-12 6 12z', fill: '#00ffff' });

/* ---- delta pane: colour, number of bars, outer edge (three units to a pixel) ---- */
const DELTA = `r1 188,g3 114,c4 236,g1 129,r5 218,g2 91,r1 168,g3 97,g1 141,g3 91,r2 171,g1 144,r1 159,g1 132,r2 168,g5 100,r2 189,g1 135,r4 168,g1 135,r5 180,r1 153,r1 162,g2 129,c4 228,g1 138,r1 159,g1 138,r1 171,r1 159,r1 162,r2 156,r2 156,g4 91,r2 171,g1 126,r1 168,g2 94,r2 174,g2 129,r1 171,r2 156,r1 162,g2 141,r1 165,g1 141,g2 147,g1 141,r1 162,g1 147,r2 180,g3 135,c9 239,p4 70,r1 174,g1 129,r3 198,p4 -3,r4 222,g1 138,r2 192,g1 132,r1 156,g1 144,r2 162,g2 121,r2 207,r4 153,r6 231,g2 121,r2 213,g1 123,r1 159,g1 132,c8 260,g1 126,r1 177,g1 126,r2 210,g1 114,r1 171,g3 82,r1 165,g1 138,c9 257,g1 129,r2 180,g1 144,r2 195,g3 124,r1 162,g4 88,r1 174,g3 94,r2 204,g1 147,c5 350,p7 -51,r1 183,g2 61,r1 186,g3 88,c5 278,g1 141,r2 252,g1 111,r1 180,g1 141,g1 141,g2 109,r2 204,g1 144,r1 168,g2 112,r1 159,g3 64,r2 201,g1 135,r3 207,g1 126,r1 159,g2 106,r1 165,g2 94,r3 186,g2 124,r1 204,g1 141,r3 177,g2 124,r4 243`;
const BOX = { r: ['#b22222', '#8b1a1a'], g: ['#32cd32', '#29a329'], c: ['#ffd700', '#0097ad'], p: ['#ffd700', '#9a549f'] };
const delta = get('delta');
let bar = FIRST;
DELTA.split(',').forEach(item => {
  const [head, edge] = item.trim().split(' ');
  const kind = head[0], n = +head.slice(1);
  const x0 = col(bar), x1 = col(bar + n - 1) + 1;
  const up = kind === 'g' || kind === 'p';
  const y = Math.round(edge / 3) + 24;
  const y0 = up ? y : 74, y1 = up ? 75 : Math.max(75, y);
  rect(delta, x0, y0, x1 - x0, y1 - y0, BOX[kind][0]);
  if (n > 1 && y1 - y0 > 2) rect(delta, x0 + 1, y0 + 1, x1 - x0 - 2, y1 - y0 - 2, BOX[kind][1]);
  bar += n;
});

/* ---- oscillator pane: successive closes (three units to a pixel) ---- */
const CLOSES = [726,681,629,582,645,692,732,765,693,732,750,765,786,807,708,651,687,642,591,552,618,576,540,510,563,621,576,630,588,633,669,615,561,573,534,507,597,648,609,654,690,714,747,669,708,654,645,573,630,582,639,594,555,621,
711,741,762,690,717,654,690,720,741,756,771,795,810,735,660,588,510,639,687,636,675,627,585,633,666,618,588,633,582,549,528,504,483,570,537,594,564,537,567,543,594,672,618,573,582,648,642,696,726,753,
783,801,816,828,750,663,597,528,606,567,645,690,726,645,543,498,471,564,627,651,684,633,675,705,648,684,636,672,699,633,585,642,678,630,591,552,573,630,669,702,738,678,717,696,639,690,726,660,702,651,
696,735,714,744,675,666,708,735,672,708,654,696,738,660,705,636,594,561,612,570,636,690,726,753,777,795,705,741,765,693,729,756,690,726,708,645,603,561,633,588,558,519,492,558,522,498,519,585,648,597,
678,726,768,792,816,732,666,627,588,549,519,498,573,534,504,582,534,495,465,552,615,660,693,720,657,711,738,678,708,654,696,642,600,642,678,630,672,621,579,636,591,549,507,531,594,552,618,660,696,648,
693,639,600,651,603,555,618,654,696,648,591,666,609,615,657,699,627,579,645,684,723,750];
const osc = get('osc');
const defs = draw(osc, 'defs', {});
[['hot', '#800000', 1, 0], ['cold', '#008000', 0, 1]].forEach(([id, color, a, b]) => {
  const g = draw(defs, 'linearGradient', { id, x1: 0, y1: 0, x2: 0, y2: 1 });
  draw(g, 'stop', { offset: 0, 'stop-color': color, 'stop-opacity': a });
  draw(g, 'stop', { offset: 1, 'stop-color': color, 'stop-opacity': b });
});
rect(osc, 0, 8, 1547, 41, 'url(#hot)');
rect(osc, 0, 118, 1547, 41, 'url(#cold)');
['57,116 91,117 91,133 81,133 75,124 63,124', '885,116 917,117 917,131 906,131 900,122 888,122', '935,114 938,117 951,117 951,122 941,122 938,119',
 '1020,116 1052,117 1052,132 1040,132 1035,124 1024,124', '1170,99 1176,117 1170,117'
].forEach(points => draw(osc, 'polygon', { points, fill: '#00bcd4' }));
['462,56 462,50 467,47 481,47 484,41 495,41 500,48 513,48 518,43 529,43 529,50 467,50 463,53', '1237,50 1242,50 1245,47 1254,47 1254,50 1242,51 1239,56 1237,56'
].forEach(points => draw(osc, 'polygon', { points, fill: '#ba68c8' }));
let open = 690;
CLOSES.forEach((close, i) => {
  const top = Math.round(Math.min(open, close) / 3) - 125;
  const bottom = Math.round(Math.max(open, close) / 3) - 124;
  rect(osc, col(FIRST + i) - 1, top, 3, bottom - top, close > open ? RED : GREEN);
  open = close;
});
rect(osc, 0, 82, 1547, 3, 'rgba(160,100,20,.75)');
rect(osc, 0, 83, 1548, 1, '#f5a81c');

/* ---- scales ---- */
const label = (root, y, s, major) => draw(root, 'text', { x: 8, y: y + 4, class: major ? 'major' : '' }, s);
for (let i = 0; i < 13; i++) {
  if (i === 9) continue;                 // covered by the last-price tag
  const value = (113800 - 20 * i) / 100000;
  label(get('scale1'), 79 + Math.round(44.69 * i), value.toFixed(5), i % 5 === 0);
}
[[35, '4,000.00000'], [74, '0.00000'], [112, '-4,000.00000']].forEach(([y, s]) => label(get('scale2'), y, s));
[[17, '80.00000'], [50, '40.00000'], [83, '0.00000'], [117, '-40.00000'], [150, '-80.00000']].forEach(([y, s]) => label(get('scale3'), y, s));
for (let k = -45; k <= 240; k += 15) {
  const minutes = 780 + k;
  const s = Math.floor(minutes / 60) + ':' + String(minutes % 60).padStart(2, '0');
  draw(get('times'), 'text', { x: col(k), y: 16, 'text-anchor': 'middle', class: minutes % 60 ? '' : 'major' }, s);
}
```
